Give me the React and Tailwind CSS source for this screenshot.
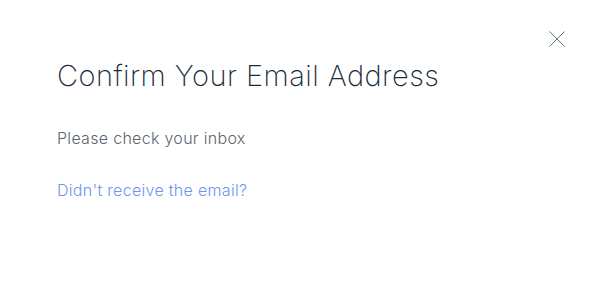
export default function App() {
  return (
    <div className="relative w-[594px] h-[290px] bg-white" style={{ fontFamily: "Inter, 'Liberation Sans', sans-serif" }}>
      <button className="absolute left-[549px] top-[31px] w-[16px] h-[16px] p-0">
        <svg width="16" height="16" viewBox="0 0 16 16" fill="none">
          <path d="M0.5 0.5 L15.5 15.5 M15.5 0.5 L0.5 15.5" stroke="#5e7a76" strokeWidth="1" />
        </svg>
      </button>
      <div className="pl-[57px] pt-[58px] flex flex-col">
        <h1 className="text-[29px] leading-[36px] font-extralight text-[#1a2c3c] tracking-[0.45px]">Confirm Your Email Address</h1>
        <p className="mt-[34px] text-[16px] leading-[20px] font-light text-[#5b6670] tracking-[0.3px]">Please check your inbox</p>
        <a className="mt-[32px] text-[16px] leading-[20px] font-light text-[#6f95ee] tracking-[0.3px]">Didn't receive the email?</a>
      </div>
    </div>
  );
}
